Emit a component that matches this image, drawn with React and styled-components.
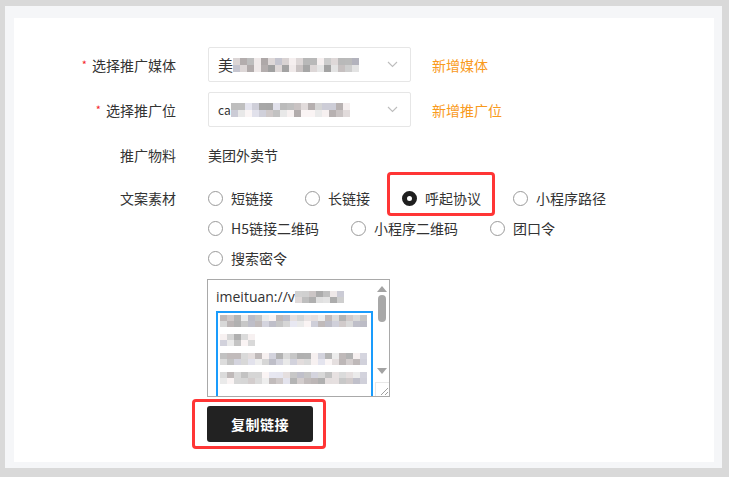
import React from 'react';
import styled, { createGlobalStyle } from 'styled-components';

const GlobalStyle = createGlobalStyle`
  html, body {
    margin: 0;
    padding: 0;
    background: #d9d9d9;
  }
  body {
    font-family: "Noto Sans CJK SC", "Noto Sans", sans-serif;
    color: #333;
  }
`;

const Frame = styled.div`
  margin: 6px 7px 9px 5px;
  padding: 12px 8px 6px 9px;
  background: #f5f6f8;
`;

const Panel = styled.div`
  height: 444px;
  box-sizing: border-box;
  padding-top: 29px;
  background: #fff;
`;

const Row = styled.div`
  display: flex;
  align-items: ${(p) => (p.$top ? 'flex-start' : 'center')};
  min-height: ${(p) => (p.$top ? 'auto' : '35px')};
  margin-bottom: ${(p) => p.$gap ?? 10}px;
`;

const Label = styled.div`
  width: 162px;
  margin-right: 32px;
  flex-shrink: 0;
  text-align: right;
  font-size: 14px;
  line-height: ${(p) => (p.$top ? '30px' : '20px')};
  color: #333;
`;

const Star = styled.span`
  display: inline-block;
  margin-right: 5px;
  color: #f5222d;
  font-size: 11px;
  vertical-align: 2px;
`;

const SelectBox = styled.div`
  width: 203px;
  height: 35px;
  box-sizing: border-box;
  border: 1px solid #e6e6e6;
  border-radius: 2px;
  display: flex;
  align-items: center;
  padding: 0 12px 0 9px;
`;

const SelectText = styled.span`
  display: flex;
  align-items: center;
  flex: 1;
  font-size: ${(p) => p.$size || 14}px;
  color: #333;
`;

const AddLink = styled.a`
  margin-left: 21px;
  font-size: 14px;
  color: #f99a1c;
  text-decoration: none;
`;

const Value = styled.div`
  font-size: 14px;
  line-height: 20px;
  color: #333;
`;

const RadioGroup = styled.div`
  width: 430px;
  display: flex;
  flex-wrap: wrap;
`;

const RadioItem = styled.label`
  position: relative;
  display: flex;
  align-items: center;
  height: 30px;
  margin-right: 32px;
  font-size: 14px;
  color: #333;
`;

const Circle = styled.span`
  width: 15px;
  height: 15px;
  box-sizing: border-box;
  border-radius: 50%;
  margin-right: 8px;
  background: #fff;
  border: ${(p) => (p.$checked ? '5px solid #1f1f1f' : '1px solid #9a9a9a')};
`;

const Highlight = styled.div`
  position: relative;
  display: inline-flex;

  &::after {
    content: '';
    position: absolute;
    top: ${(p) => p.$t}px;
    right: ${(p) => p.$r}px;
    bottom: ${(p) => p.$b}px;
    left: ${(p) => p.$l}px;
    border: 3px solid #ff3535;
    border-radius: 4px;
    pointer-events: none;
  }
`;

const TextBox = styled.div`
  width: 183px;
  height: 118px;
  box-sizing: border-box;
  border: 1px solid #a9a9a9;
  display: flex;
  overflow: hidden;
  margin-left: -1px;
`;

const TextContent = styled.div`
  flex: 1;
  padding: 7px 0 0 8px;
  overflow: hidden;
`;

const UrlLine = styled.div`
  display: flex;
  align-items: center;
  font-size: 14px;
  line-height: 20px;
  color: #333;
  font-family: "Open Sans", "Noto Sans", sans-serif;
  margin-bottom: 4px;
`;

const Selection = styled.div`
  width: 157px;
  height: 90px;
  box-sizing: border-box;
  border: 2px solid #1a9cfc;
  padding: 2px 0 0 2px;
  display: flex;
  flex-direction: column;
  gap: 7px;
`;

const ScrollBar = styled.div`
  width: 14px;
  display: flex;
  flex-direction: column;
  align-items: center;
  background: #fff;
`;

const Arrow = styled.span`
  width: 0;
  height: 0;
  margin: ${(p) => (p.$down ? '0 0 8px' : '6px 0 3px')};
  border-left: 5px solid transparent;
  border-right: 5px solid transparent;
  ${(p) => (p.$down ? 'border-top: 6px solid #a3a3a3;' : 'border-bottom: 6px solid #a3a3a3;')}
`;

const Thumb = styled.span`
  width: 8px;
  height: 27px;
  border-radius: 4px;
  background: #a8a8a8;
`;

const Track = styled.div`
  flex: 1;
  display: flex;
  flex-direction: column;
  align-items: center;
`;

const Grip = styled.div`
  width: 14px;
  height: 14px;
  border-top: 1px solid #e8e8e8;
  border-left: 1px solid #e8e8e8;
  box-sizing: border-box;
  display: flex;
  align-items: flex-end;
  justify-content: flex-end;
`;

const Button = styled.button`
  width: 106px;
  height: 36px;
  margin-left: -1px;
  border: none;
  border-radius: 3px;
  background: #222;
  color: #fff;
  font-family: "Noto Sans CJK SC", sans-serif;
  font-size: 14px;
  font-weight: 700;
  letter-spacing: 0.5px;
  cursor: pointer;
`;

const MosaicGrid = styled.span`
  display: inline-grid;
  grid-template-columns: repeat(${(p) => p.$cols}, ${(p) => p.$size}px);
  grid-auto-rows: ${(p) => p.$h}px;
`;

// deterministic noise so the redacted blocks stay the same on every render
const shade = (seed, i, lo, hi) => {
  const n = Math.sin(seed * 91.7 + i * 12.9898) * 43758.5453;
  const f = n - Math.floor(n);
  const g = Math.round(lo + f * (hi - lo));
  const tint = Math.floor(f * 11) % 3;
  const r = tint === 1 ? g + 6 : g;
  const b = tint === 2 ? g + 10 : g;
  return `rgb(${Math.min(r, 250)}, ${g}, ${Math.min(b, 252)})`;
};

const Mosaic = ({ cols, rows = 2, seed = 1, size = 7, h = 6, lo = 180, hi = 245 }) => (
  <MosaicGrid $cols={cols} $size={size} $h={h}>
    {Array.from({ length: cols * rows }).map((_, i) => (
      <span key={i} style={{ background: shade(seed, i, lo, hi) }} />
    ))}
  </MosaicGrid>
);

const Chevron = () => (
  <svg width="11" height="7" viewBox="0 0 11 7">
    <polyline points="1,1 5.5,5.5 10,1" fill="none" stroke="#bdbdbd" strokeWidth="1.1" />
  </svg>
);

const options = ['短链接', '长链接', '呼起协议', '小程序路径', 'H5链接二维码', '小程序二维码', '团口令', '搜索密令'];

export default function App() {
  const checked = '呼起协议';

  return (
    <>
      <GlobalStyle />
      <Frame>
        <Panel>
          <Row>
            <Label><Star>*</Star>选择推广媒体</Label>
            <SelectBox>
              <SelectText $size={15}>美<Mosaic cols={18} seed={3} size={7} h={7} lo={160} hi={240} /></SelectText>
              <Chevron />
            </SelectBox>
            <AddLink>新增媒体</AddLink>
          </Row>

          <Row>
            <Label><Star>*</Star>选择推广位</Label>
            <SelectBox>
              <SelectText $size={12}>ca<Mosaic cols={17} seed={7} size={7} h={7} lo={165} hi={245} /></SelectText>
              <Chevron />
            </SelectBox>
            <AddLink>新增推广位</AddLink>
          </Row>

          <Row $gap={11}>
            <Label>推广物料</Label>
            <Value>美团外卖节</Value>
          </Row>

          <Row $top $gap={6}>
            <Label $top>文案素材</Label>
            <RadioGroup>
              {options.map((o) =>
                o === checked ? (
                  <Highlight key={o} $t={-11} $r={18} $b={-3} $l={-15}>
                    <RadioItem>
                      <Circle $checked />
                      {o}
                    </RadioItem>
                  </Highlight>
                ) : (
                  <RadioItem key={o}>
                    <Circle />
                    {o}
                  </RadioItem>
                )
              )}
            </RadioGroup>
          </Row>

          <Row $top $gap={9}>
            <Label />
            <TextBox>
              <TextContent>
                <UrlLine>imeituan://v<Mosaic cols={7} seed={11} size={7} h={6} lo={170} hi={235} /></UrlLine>
                <Selection>
                  <Mosaic cols={21} seed={13} lo={175} hi={245} />
                  <Mosaic cols={5} seed={17} lo={175} hi={245} />
                  <Mosaic cols={21} seed={19} lo={175} hi={245} />
                  <Mosaic cols={21} seed={23} lo={175} hi={245} />
                </Selection>
              </TextContent>
              <ScrollBar>
                <Track>
                  <Arrow />
                  <Thumb />
                </Track>
                <Arrow $down />
                <Grip>
                  <svg width="10" height="10" viewBox="0 0 10 10">
                    <line x1="9" y1="2" x2="2" y2="9" stroke="#888" strokeWidth="0.8" />
                    <line x1="9" y1="6" x2="6" y2="9" stroke="#888" strokeWidth="0.8" />
                  </svg>
                </Grip>
              </ScrollBar>
            </TextBox>
          </Row>

          <Row $top>
            <Label />
            <Highlight $t={-7} $r={-13} $b={-7} $l={-16}>
              <Button>复制链接</Button>
            </Highlight>
          </Row>
        </Panel>
      </Frame>
    </>
  );
}
